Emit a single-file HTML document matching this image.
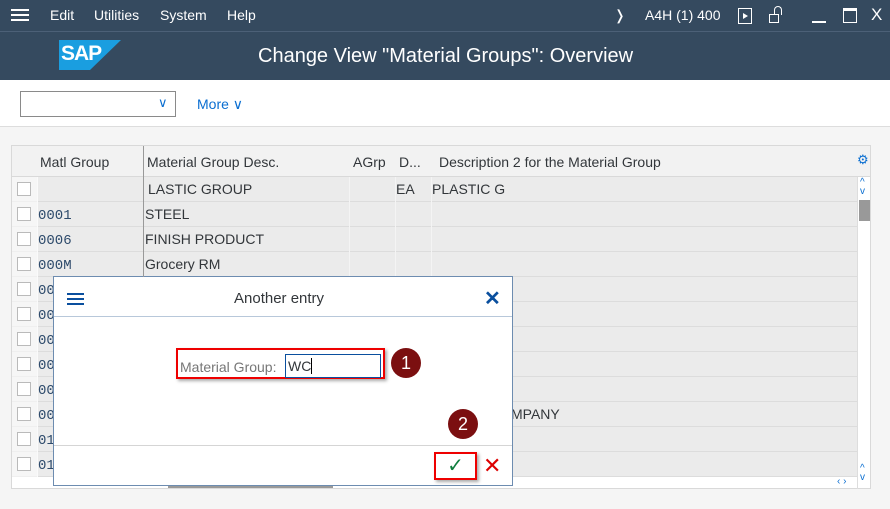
<!DOCTYPE html>
<html><head><style>
*{margin:0;padding:0;box-sizing:border-box}
body{width:890px;height:509px;background:#f5f5f5;font-family:"Liberation Sans",sans-serif;position:relative;overflow:hidden;font-size:14px;color:#32363a}
.abs{position:absolute}
.top{left:0;top:0;width:890px;height:80px;background:#354a5f;color:#fff}
.menu span{position:absolute;top:7px;font-size:14px}
.tb{left:0;top:80px;width:890px;height:47px;background:#fff;border-bottom:1px solid #ddd}
.tbl{left:11px;top:145px;width:860px;height:344px;background:#fff;border:1px solid #d9d9d9}
.hdr{left:0;top:0;width:858px;height:31px;background:#f2f2f2;border-bottom:1px solid #d9d9d9}
.row{position:absolute;left:0;width:845px;height:25px;border-bottom:1px solid #dcdcdc;background:#ebebeb}
.row:before{content:"";position:absolute;left:25px;top:0;width:1px;height:25px;background:#fafafa}
.row:after{content:"";position:absolute;left:337px;top:0;width:1px;height:25px;background:#f4f4f4;box-shadow:46px 0 0 #f4f4f4,82px 0 0 #f4f4f4}
.cb{position:absolute;left:5px;top:5px;width:14px;height:14px;border:1px solid #666;background:#fff}
.c{position:absolute;top:4px;font-size:14px}
.mono{font-family:"Liberation Mono",monospace;color:#2d4a6b;top:6px}
.dlg{left:53px;top:276px;width:460px;height:210px;background:#fff;border:1px solid #6d8cb0}
.badge{width:30px;height:30px;border-radius:50%;background:#7b0f10;color:#fff;text-align:center;line-height:30px;font-size:18px}
</style></head><body>
<div class="abs top">
 <div class="abs" style="left:0;top:31px;width:890px;height:1px;background:#4c6077"></div>
 <div class="abs" style="left:11px;top:9px;width:18px;height:2px;background:#fff;box-shadow:0 5px 0 #fff,0 10px 0 #fff"></div>
 <div class="menu"><span style="left:50px">Edit</span><span style="left:94px">Utilities</span><span style="left:160px">System</span><span style="left:227px">Help</span>
 <span style="left:614px">&#x276D;</span><span style="left:645px">A4H (1) 400</span></div>
 <div class="abs" style="left:738px;top:8px;width:14px;height:16px;border:1.5px solid #fff"></div>
 <div class="abs" style="left:743px;top:13px;width:0;height:0;border-left:5px solid #fff;border-top:3px solid transparent;border-bottom:3px solid transparent"></div>
 <div class="abs" style="left:769px;top:14px;width:10px;height:9px;border:1.5px solid #fff"></div>
 <div class="abs" style="left:774px;top:6px;width:8px;height:9px;border:1.5px solid #fff;border-bottom:none;border-radius:4px 4px 0 0"></div>
 <div class="abs" style="left:812px;top:21px;width:14px;height:2px;background:#fff"></div>
 <div class="abs" style="left:843px;top:8px;width:14px;height:15px;border:1.5px solid #fff;border-top-width:3px"></div>
 <div class="abs" style="left:871px;top:5px;font-size:17px">X</div>
 <div class="abs" style="left:59px;top:40px;width:62px;height:30px;background:#1a9ee0;clip-path:polygon(0 0,100% 0,50% 100%,0 100%);color:#fff;font-weight:bold;font-size:21px;padding:2px 0 0 2px;letter-spacing:-1px">SAP</div>
 <div class="abs" style="left:258px;top:45px;font-size:20px">Change View "Material Groups": Overview</div>
</div>
<div class="abs tb">
 <div class="abs" style="left:20px;top:11px;width:156px;height:26px;border:1px solid #8a8a8a"></div>
 <div class="abs" style="left:158px;top:15px;color:#0a6ed1;font-size:13px">&#x2228;</div>
 <div class="abs" style="left:197px;top:16px;color:#0a6ed1;font-size:14px">More &#x2228;</div>
</div>
<div class="abs tbl">
 <div class="abs hdr">
  <div class="c" style="left:28px;top:8px">Matl Group</div>
  <div class="abs" style="left:131px;top:0;width:1px;height:31px;background:#999"></div>
  <div class="c" style="left:135px;top:8px">Material Group Desc.</div>
  <div class="c" style="left:341px;top:8px">AGrp</div>
  <div class="c" style="left:387px;top:8px">D...</div>
  <div class="c" style="left:427px;top:8px">Description 2 for the Material Group</div>
  <div class="c" style="left:845px;top:6px;color:#0a6ed1;font-size:13px">⚙</div>
 </div>
 <div class="abs" style="left:131px;top:31px;width:1px;height:100px;background:#999;z-index:2"></div>
 <div class="row" style="top:31px"><div class="cb"></div><div class="c" style="left:136px">LASTIC GROUP</div><div class="c" style="left:384px">EA</div><div class="c" style="left:420px">PLASTIC G</div></div>
 <div class="row" style="top:56px"><div class="cb"></div><div class="c mono" style="left:26px">0001</div><div class="c" style="left:133px">STEEL</div></div>
 <div class="row" style="top:81px"><div class="cb"></div><div class="c mono" style="left:26px">0006</div><div class="c" style="left:133px">FINISH PRODUCT</div></div>
 <div class="row" style="top:106px"><div class="cb"></div><div class="c mono" style="left:26px">000M</div><div class="c" style="left:133px">Grocery RM</div></div>
 <div class="row" style="top:131px"><div class="cb"></div><div class="c mono" style="left:26px">00</div></div>
 <div class="row" style="top:156px"><div class="cb"></div><div class="c mono" style="left:26px">00</div></div>
 <div class="row" style="top:181px"><div class="cb"></div><div class="c mono" style="left:26px">00</div></div>
 <div class="row" style="top:206px"><div class="cb"></div><div class="c mono" style="left:26px">00</div></div>
 <div class="row" style="top:231px"><div class="cb"></div><div class="c mono" style="left:26px">00</div></div>
 <div class="row" style="top:256px"><div class="cb"></div><div class="c mono" style="left:26px">00</div><div class="c" style="left:499px">MPANY</div></div>
 <div class="row" style="top:281px"><div class="cb"></div><div class="c mono" style="left:26px">01</div></div>
 <div class="row" style="top:306px"><div class="cb"></div><div class="c mono" style="left:26px">01</div></div>
 <div class="abs" style="left:0;top:31px;width:25px;height:300px;background:#fff;opacity:0.55"></div>
 <div class="abs" style="left:845px;top:31px;width:1px;height:312px;background:#ddd"></div>
 <div class="abs" style="left:848px;top:32px;font-size:10px;color:#0a6ed1;line-height:9px">^<br>v</div>
 <div class="abs" style="left:847px;top:54px;width:11px;height:21px;background:#999"></div>
 <div class="abs" style="left:848px;top:318px;font-size:10px;color:#0a6ed1;line-height:9px">^<br>v</div>
 <div class="abs" style="left:825px;top:330px;font-size:10px;color:#0a6ed1">‹ ›</div>
 <div class="abs" style="left:156px;top:339px;width:165px;height:3px;background:#999"></div>
</div>
<div class="abs dlg">
 <div class="abs" style="left:13px;top:16px;width:17px;height:2px;background:#0a4f9e;box-shadow:0 5px 0 #0a4f9e,0 10px 0 #0a4f9e"></div>
 <div class="abs" style="left:180px;top:13px;font-size:15px">Another entry</div>
 <div class="abs" style="left:430px;top:9px;font-size:20px;color:#0a4f9e;font-weight:bold">✕</div>
 <div class="abs" style="left:0;top:39px;width:458px;height:1px;background:#b8c8da"></div>
 <div class="abs" style="left:0;top:168px;width:458px;height:1px;background:#d5d5d5"></div>
 <div class="abs" style="left:122px;top:71px;width:209px;height:31px;border:2px solid #e00;box-shadow:2px 2px 3px #aaa"></div>
 <div class="abs" style="left:126px;top:82px;font-size:14px;color:#777">Material Group:</div>
 <div class="abs" style="left:231px;top:77px;width:96px;height:24px;border:1px solid #0a4f9e;padding:3px 0 0 2px;font-size:14px">WC<span style="border-left:1px solid #000"></span></div>
 <div class="abs badge" style="left:337px;top:71px">1</div>
 <div class="abs badge" style="left:394px;top:132px">2</div>
 <div class="abs" style="left:380px;top:175px;width:43px;height:28px;border:2px solid #e00;box-shadow:2px 2px 3px #aaa;color:#107e3e;font-size:20px;text-align:center;line-height:24px">✓</div>
 <div class="abs" style="left:429px;top:176px;color:#d00;font-size:22px">✕</div>
</div>
</body></html>
